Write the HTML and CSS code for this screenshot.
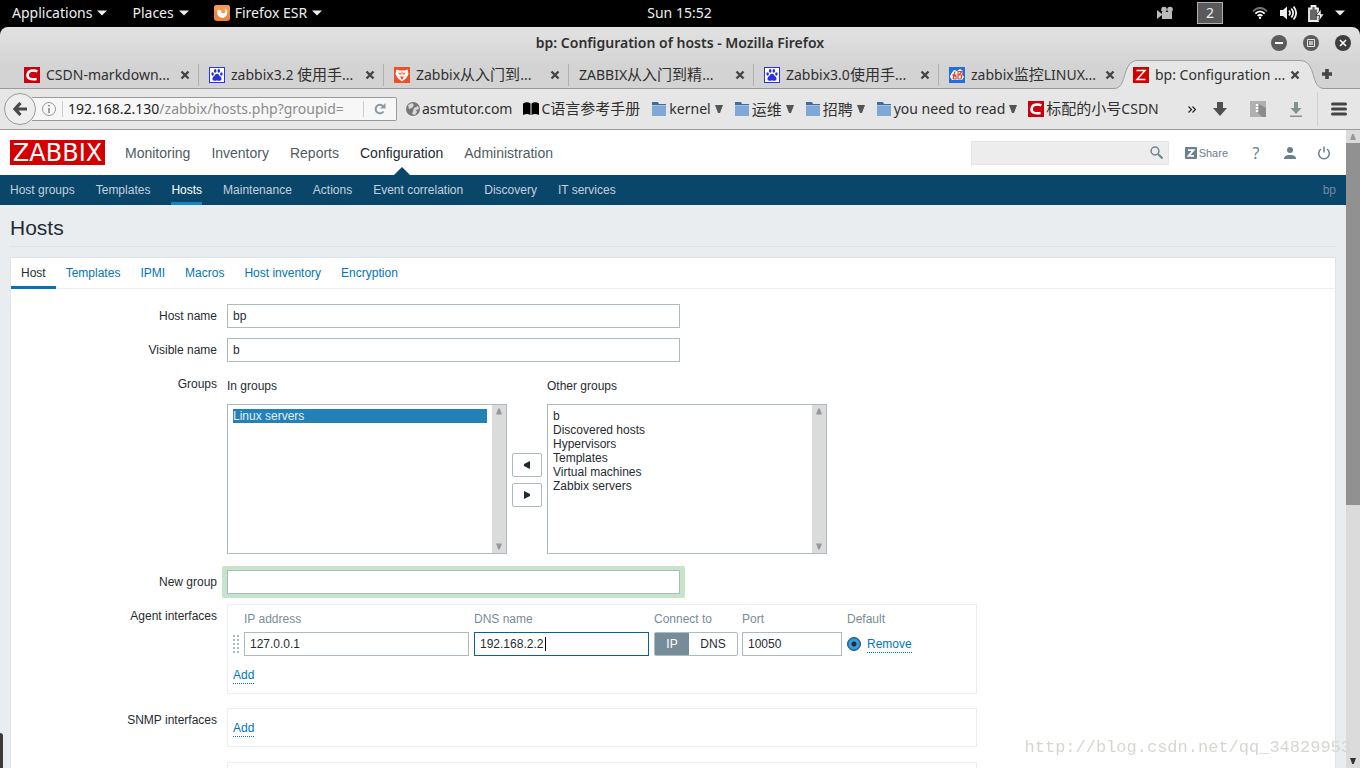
FILE: index.html
```html
<!DOCTYPE html>
<html lang="en">
<head>
<meta charset="utf-8">
<title>bp: Configuration of hosts</title>
<link rel="stylesheet" href="styles.css">
</head>
<body>
<svg class="defs" aria-hidden="true">
  <symbol id="csdn" viewBox="0 0 16 16"><rect width="16" height="16" fill="#c9000d"/><path d="M13.4 4.2C8.6 2.6 4.2 3.6 3.6 7.6c-.5 4 3 5.200 9 4.400" fill="none" stroke="#fff" stroke-width="2.600"/></symbol>
  <symbol id="baidu" viewBox="0 0 16 16"><rect x=".5" y=".5" width="15" height="15" fill="#fff" stroke="#2932e1"/><g fill="#2932e1"><ellipse cx="3.600" cy="7" rx="1.300" ry="1.800"/><ellipse cx="6.200" cy="3.900" rx="1.300" ry="1.800"/><ellipse cx="9.800" cy="3.900" rx="1.300" ry="1.800"/><ellipse cx="12.400" cy="7" rx="1.300" ry="1.800"/><path d="M8 6.700c1.700 0 2.100 1.700 3.400 2.800 2 1.700 1.200 4.300-1 4.300-1 0-1.400-.3-2.400-.3s-1.400.3-2.400.3c-2.200 0-3-2.600-1-4.300C5.900 8.400 6.300 6.700 8 6.700z"/></g></symbol>
  <symbol id="folder" viewBox="0 0 16 16"><path d="M1 1h6l1 2h7v3H1z" fill="#3f6d94"/><rect x="1" y="4" width="14" height="11" fill="#7fa8d6"/><path d="M1 4h14v1H1z" fill="#a3c1e3"/></symbol>
  <symbol id="close" viewBox="0 0 10 10"><path d="M1.500 1.500l7 7m0-7l-7 7" stroke="#454545" stroke-width="2.400"/></symbol>
  <symbol id="down" viewBox="0 0 10 6"><path d="M0 .5h10L5 5.500z" fill="currentColor"/></symbol>
  <symbol id="tri" viewBox="0 0 8 8"><path d="M0 0h8L5 8H3z" fill="currentColor"/></symbol>
</svg>

<header class="topbar">
  <nav class="desk-menu">
    <button class="plain">Applications <svg class="caret"><use href="#down"/></svg></button>
    <button class="plain">Places <svg class="caret"><use href="#down"/></svg></button>
    <button class="plain"><svg class="fx" viewBox="0 0 16 16"><rect width="16" height="16" rx="3" fill="#f0843c"/><rect width="16" height="7" rx="3" fill="#f59a55"/><path d="M4 4.500c-2 3.500-.3 8 4 8.300 4 .2 6.200-3.300 5-7.300-.6-1.200-1.400-1.700-2.300-2 1 1.500 1 3 .2 4-.7.800-2 1-3 .3C7 7 7 6 7.600 5.500 6.500 5.600 5 5.300 4 4.500z" fill="#fff"/></svg>Firefox ESR <svg class="caret"><use href="#down"/></svg></button>
  </nav>
  <time>Sun 15:52</time>
  <div class="tray">
    <svg class="cam" viewBox="0 0 16 14"><g fill="#bbb"><circle cx="7" cy="3.500" r="2.800"/><circle cx="13" cy="3.500" r="2.800"/><path d="M5 6h10v7H5zM0 4l5 4v1l-5 4z"/></g></svg>
    <button class="workspace">2</button>
    <svg class="wifi" viewBox="0 0 16 12"><g fill="none" stroke="#fff" stroke-width="1.800"><path d="M1 4.500C5-.2 11-.2 15 4.500" stroke="#777"/><path d="M3.300 6.700c3-3.200 6.400-3.200 9.400 0"/><path d="M5.600 8.900c1.600-1.600 3.200-1.600 4.800 0"/></g><circle cx="8" cy="10.800" r="1.200" fill="#fff"/></svg>
    <svg class="vol" viewBox="0 0 17 16"><path d="M0 5h3l4-3.500v13L3 11H0z" fill="#eee"/><g fill="none" stroke="#eee" stroke-width="1.800"><path d="M9 5.500q2 2.500 0 5M11.300 3.500q3.600 4.500 0 9M13.600 1.500q5 6.500 0 13"/></g></svg>
    <svg class="bat" viewBox="0 0 16 17"><path d="M1 3.500h2.500V1h4v2.500H10V16H1z" fill="#666" stroke="#eee" stroke-width="1.800"/><path d="M13 4l-5 6.500h3.500L11 16l5-7h-3z" fill="#eee" stroke="#000" stroke-width=".6"/></svg>
    <svg class="caret"><use href="#down"/></svg>
  </div>
</header>

<div class="window">
  <div class="titlebar">
    <strong>bp: Configuration of hosts - Mozilla Firefox</strong>
    <div class="winbuttons">
      <button class="plain" aria-label="Minimize"><svg viewBox="0 0 16 16"><circle cx="8" cy="8" r="8" fill="#5c5c5c"/><path d="M4 8h8" stroke="#fff" stroke-width="1.800"/></svg></button>
      <button class="plain" aria-label="Maximize"><svg viewBox="0 0 16 16"><circle cx="8" cy="8" r="8" fill="#5c5c5c"/><path d="M4.500 4.500h7v7h-7z" fill="none" stroke="#e8e8e8"/><path d="M6 6h4v4H6z" fill="#bbb"/></svg></button>
      <button class="plain" aria-label="Close"><svg viewBox="0 0 16 16"><circle cx="8" cy="8" r="8" fill="#3e3e3e"/><path d="M5 5l6 6m0-6l-6 6" stroke="#fff" stroke-width="1.600"/></svg></button>
    </div>
  </div>

  <div class="tabs">
    <div class="tab"><svg class="ico"><use href="#csdn"/></svg><span>CSDN-markdown...</span><svg class="x"><use href="#close"/></svg></div>
    <div class="tab"><svg class="ico"><use href="#baidu"/></svg><span>zabbix3.2 <bdi lang="zh">使用手</bdi>...</span><svg class="x"><use href="#close"/></svg></div>
    <div class="tab"><svg class="ico" viewBox="0 0 16 16"><rect width="16" height="16" fill="#ef4f23"/><path d="M2.500 2.500l3.500 1h4l3.500-1L14.500 7l-2 4L8 14.500 3.500 11l-2-4z" fill="#fff"/><path d="M4 5.500l3 .8L6.300 8zM12 5.500l-3 .8.7 1.700zM6 9.500h4L8 13zM7.500 4.500h1v3h-1z" fill="#ef4f23"/></svg><span>Zabbix<bdi lang="zh">从入门到</bdi>...</span><svg class="x"><use href="#close"/></svg></div>
    <div class="tab"><span>ZABBIX<bdi lang="zh">从入门到精</bdi>...</span><svg class="x"><use href="#close"/></svg></div>
    <div class="tab"><svg class="ico"><use href="#baidu"/></svg><span>Zabbix3.0<bdi lang="zh">使用手</bdi>...</span><svg class="x"><use href="#close"/></svg></div>
    <div class="tab last"><svg class="ico" viewBox="0 0 16 16"><rect width="16" height="16" fill="#1f6fe0"/><path d="M2 7l3-4 3 1 3-2 3 2-1 3 2 3-2 3H3L1 10z" fill="#fff"/><path d="M3 8h4M6 4.500L4 12M4 12h3V9H4M9 4.500h4L10 8h3l-1 4H9z" fill="none" stroke="#e0402c" stroke-width="1.200"/></svg><span>zabbix<bdi lang="zh">监控</bdi>LINUX...</span><svg class="x"><use href="#close"/></svg></div>
    <div class="tab active">
      <svg class="curve" viewBox="0 0 24 29"><path d="M0 29V28.500C14 28.500 7 .5 24 .5V29z" fill="#e6e6e6"/><path d="M0 28.500C14 28.500 7 .5 24 .5" fill="none" stroke="#9a9fa5"/></svg>
      <div class="tab-body"><svg class="ico" viewBox="0 0 16 16"><rect width="16" height="16" fill="#d40000"/><path d="M3.500 3.500h8.500L4 12.500h8.500" fill="none" stroke="#fff" stroke-width="1.500"/></svg><span>bp: Configuration ...</span><svg class="x"><use href="#close"/></svg></div>
      <svg class="curve" viewBox="0 0 24 29"><path d="M24 29V28.500C10 28.500 17 .5 0 .5V29z" fill="#e6e6e6"/><path d="M24 28.500C10 28.500 17 .5 0 .5" fill="none" stroke="#9a9fa5"/></svg>
    </div>
    <button class="plain newtab" aria-label="New tab"><svg viewBox="0 0 10 10"><path d="M5 0v10M0 5h10" stroke="#454545" stroke-width="3.600"/></svg></button>
  </div>

  <div class="toolbar">
    <button class="plain back" aria-label="Back"><svg viewBox="0 0 14 14"><path d="M7.500 1L2 7l5.500 6M2 7h12" fill="none" stroke="#4a4a4a" stroke-width="3.200"/></svg></button>
    <div class="urlbar">
      <svg class="info" viewBox="0 0 14 14"><circle cx="7" cy="7" r="6.500" fill="none" stroke="#999"/><path d="M7 6v5M7 3v1.600" stroke="#888" stroke-width="1.600"/></svg>
      <span class="url"><b>192.168.2.130</b>/zabbix/hosts.php?groupid=</span>
      <button class="plain reload" aria-label="Reload"><svg viewBox="0 0 12 12"><path d="M9.500 8.500A4.300 4.300 0 1 1 9 3" fill="none" stroke="#8a9aa6" stroke-width="2"/><path d="M11.500 0v5.500H6z" fill="#8a9aa6"/></svg></button>
    </div>
    <nav class="bookmarks">
      <a href="#"><svg class="globe" viewBox="0 0 14 14"><circle cx="7" cy="7" r="7" fill="#777"/><path d="M2 3l4-2 2 2-2 3-3 1zM8 6l4-2 1 3-3 1 1 2-2 3-3-1 1-3z" fill="#d8d8d8"/></svg>asmtutor.com</a>
      <a href="#"><svg class="ico" viewBox="0 0 16 16"><path d="M0 2.500Q4 0 7.500 2.500V14Q4 12 0 14zM8.500 2.500Q12 0 16 2.500V14Q12 12 8.500 14z"/></svg><span>C<bdi lang="zh">语言参考手册</bdi></span></a>
      <a href="#"><svg class="ico"><use href="#folder"/></svg>kernel<svg class="tri"><use href="#tri"/></svg></a>
      <a href="#"><svg class="ico"><use href="#folder"/></svg><bdi lang="zh">运维</bdi><svg class="tri"><use href="#tri"/></svg></a>
      <a href="#"><svg class="ico"><use href="#folder"/></svg><bdi lang="zh">招聘</bdi><svg class="tri"><use href="#tri"/></svg></a>
      <a href="#"><svg class="ico"><use href="#folder"/></svg>you need to read<svg class="tri"><use href="#tri"/></svg></a>
      <a href="#"><svg class="ico"><use href="#csdn"/></svg><span><bdi lang="zh">标配的小号</bdi>CSDN</span></a>
    </nav>
    <div class="tools">
      <button class="plain more" aria-label="More"><svg viewBox="0 0 8 7"><path d="M.5.500l3 3-3 3M4.500.500l3 3-3 3" fill="none" stroke="#222" stroke-width="1.200"/></svg></button>
      <button class="plain" aria-label="Downloads"><svg viewBox="0 0 16 16"><path d="M5 1h6v6h4l-7 8-7-8h4z" fill="#505050"/></svg></button>
      <button class="plain zip" aria-label="Archive"><svg viewBox="0 0 16 16"><rect width="16" height="16" fill="#b0b0b0"/><path d="M9 3l7 4v9h-4l-4-4z" fill="#8c8c8c"/><path d="M7 3v9" stroke="#fff" stroke-width="2.400" stroke-dasharray="2 1"/></svg></button>
      <button class="plain" aria-label="Save"><svg viewBox="0 0 16 16"><path d="M6 1h4v6h3.500L8 13 2.500 7H6z" fill="#82928f"/><path d="M2 15.200h12" stroke="#82928f" stroke-width="1.400"/></svg></button>
      <button class="plain burger" aria-label="Menu"><svg viewBox="0 0 16 14"><path d="M1.500 2h13M1.500 7h13M1.500 12h13" stroke="#444" stroke-width="3" stroke-linecap="round"/></svg></button>
    </div>
  </div>

  <div class="viewport">
    <main class="page">
      <header class="head">
        <a class="logo" href="#" aria-label="Home">ZABBIX</a>
        <nav class="mainmenu"><a href="#">Monitoring</a><a href="#">Inventory</a><a href="#">Reports</a><a href="#" class="on">Configuration</a><a href="#">Administration</a></nav>
        <div class="userbox">
          <div class="search"><input type="text" aria-label="Search"><svg viewBox="0 0 13 13"><circle cx="5" cy="5" r="3.900" fill="none" stroke="#6f8590" stroke-width="1.500"/><path d="M8 8l4.500 4.500" stroke="#6f8590" stroke-width="2"/></svg></div>
          <a class="share" href="#"><svg viewBox="0 0 12 12"><rect width="12" height="12" rx="1" fill="#6b808d"/><path d="M3 3.200h5.500L3.600 8.800H9" fill="none" stroke="#fff" stroke-width="1.800"/></svg>Share</a>
          <a class="uico help" href="#">?</a>
          <a class="uico" href="#" aria-label="Profile"><svg viewBox="0 0 14 14"><circle cx="7" cy="4" r="3" fill="#6b808d"/><path d="M1 13c0-3 2-4 6-4s6 1 6 4z" fill="#6b808d"/></svg></a>
          <a class="uico" href="#" aria-label="Sign out"><svg viewBox="0 0 14 14"><path d="M4 3a5.300 5.300 0 1 0 6 0M7 .5v6" fill="none" stroke="#6b808d" stroke-width="1.500"/></svg></a>
        </div>
      </header>
      <nav class="submenu"><a href="#">Host groups</a><a href="#">Templates</a><a href="#" class="on">Hosts</a><a href="#">Maintenance</a><a href="#">Actions</a><a href="#">Event correlation</a><a href="#">Discovery</a><a href="#">IT services</a><span class="who">bp</span></nav>
      <div class="content">
        <h1>Hosts</h1>
        <form class="card">
          <nav class="formtabs"><a href="#" class="on">Host</a><a href="#">Templates</a><a href="#">IPMI</a><a href="#">Macros</a><a href="#">Host inventory</a><a href="#">Encryption</a></nav>
          <div class="fields">
            <label class="lab" for="host">Host name</label>
            <input class="text wide" id="host" type="text" value="bp">
            <label class="lab" for="visible">Visible name</label>
            <input class="text wide" id="visible" type="text" value="b">
            <span class="lab">Groups</span>
            <div class="groups">
              <div class="groupcol">
                <label for="in">In groups</label>
                <div class="list"><select id="in" multiple><option selected>Linux servers</option></select><div class="bar"><svg class="up"><use href="#tri"/></svg><svg><use href="#tri"/></svg></div></div>
              </div>
              <div class="move">
                <button type="button" aria-label="Add to groups"><svg viewBox="0 0 6 8"><path d="M6 0v8L0 5V3z"/></svg></button>
                <button type="button" aria-label="Remove from groups"><svg viewBox="0 0 6 8"><path d="M0 0v8l6-3V3z"/></svg></button>
              </div>
              <div class="groupcol">
                <label for="other">Other groups</label>
                <div class="list"><select id="other" multiple><option>b</option><option>Discovered hosts</option><option>Hypervisors</option><option>Templates</option><option>Virtual machines</option><option>Zabbix servers</option></select><div class="bar"><svg class="up"><use href="#tri"/></svg><svg><use href="#tri"/></svg></div></div>
              </div>
            </div>
            <label class="lab newlab" for="newgroup">New group</label>
            <div class="glow"><input class="text wide" id="newgroup" type="text"></div>
            <span class="lab">Agent interfaces</span>
            <div class="box agent">
              <table>
                <thead><tr><th></th><th>IP address</th><th>DNS name</th><th>Connect to</th><th>Port</th><th>Default</th></tr></thead>
                <tbody><tr>
                  <td class="drag"><svg viewBox="0 0 6 18"><path d="M1 0v18M5 0v18" stroke="#aab8c0" stroke-width="2" stroke-dasharray="2 2"/></svg></td>
                  <td class="c-ip"><input class="text" type="text" aria-label="IP address" value="127.0.0.1"></td>
                  <td class="c-dns"><div class="focus"><input class="text" type="text" aria-label="DNS name" value="192.168.2.2"><i class="cursor"></i></div></td>
                  <td class="c-conn"><div class="seg"><label class="picked"><input type="radio" name="useip" checked>IP</label><label><input type="radio" name="useip">DNS</label></div></td>
                  <td class="c-port"><input class="text" type="text" aria-label="Port" value="10050"></td>
                  <td><div class="def"><input type="radio" name="main" aria-label="Default" checked><button type="button" class="link">Remove</button></div></td>
                </tr></tbody>
              </table>
              <button type="button" class="link">Add</button>
            </div>
            <span class="lab">SNMP interfaces</span>
            <div class="box"><button type="button" class="link">Add</button></div>
            <span class="lab"></span>
            <div class="box"></div>
          </div>
        </form>
      </div>
    </main>
    <div class="scrollbar"><div class="cap"><svg class="up"><use href="#tri"/></svg></div><div class="thumb"></div><div class="track"></div><svg class="end"><use href="#tri"/></svg></div>
  </div>
</div>
<div class="corner"></div>
<div class="watermark">http://blog.csdn.net/qq_34829953</div>
</body>
</html>
```
FILE: styles.css
```css
* { box-sizing: border-box; }
body {
  margin: 0;
  height: 100vh;
  display: flex;
  flex-direction: column;
  overflow: hidden;
  background: #000;
  color: #1f2c33;
  font: 12px/14px "Liberation Sans", Arial, sans-serif;
}
a { text-decoration: none; color: inherit; }
svg { display: block; flex: none; }
button, input, select { font: inherit; color: inherit; margin: 0; }
.plain { background: none; border: 0; padding: 0; display: flex; align-items: center; }
.defs { position: absolute; width: 0; height: 0; }
.ico { width: 16px; height: 16px; }
.caret { width: 10px; height: 6px; }

/* desktop bar */
.topbar, .titlebar, .tabs, .toolbar { font-family: "Noto Sans", "Noto Sans CJK SC", sans-serif; font-size: 14px; line-height: 20px; }
[lang="zh"] { font-family: "Noto Sans CJK SC", sans-serif; font-size: 15px; line-height: 18px; }
.topbar { height: 27px; flex: none; display: grid; grid-template-columns: 1fr auto 1fr; align-items: center; color: #eee; padding: 0 13px 1px 12px; }
.desk-menu { display: flex; gap: 25px; }
.desk-menu .plain { gap: 5px; }
.fx { width: 16px; height: 16px; }
.tray { display: flex; align-items: center; justify-content: flex-end; padding-right: 2px; }
.cam { width: 16px; height: 14px; margin-right: 24px; }
.workspace { width: 26px; height: 22px; padding: 0; border: 1px solid #b0b0b0; background: #5a5a5a; margin-right: 29px; }
.wifi { width: 16px; height: 12px; margin-right: 12px; }
.vol { width: 17px; height: 16px; margin-right: 11px; }
.bat { width: 16px; height: 17px; margin-right: 11px; }

/* browser window */
.window { flex: 1; min-height: 0; display: flex; flex-direction: column; border-radius: 8px 8px 0 0; overflow: hidden; background: linear-gradient(#e2e2e2, #d3d3d3 40px); color: #303030; }
.titlebar { height: 33px; flex: none; display: grid; grid-template-columns: 1fr auto 1fr; align-items: center; padding: 0 9px 2px; }
.titlebar strong { grid-column: 2; font-weight: 600; }
.winbuttons { display: flex; gap: 16px; justify-content: flex-end; }
.winbuttons svg { width: 16px; height: 16px; }
.tabs { height: 29px; flex: none; display: flex; padding-left: 14px; border-bottom: 1px solid #9a9a9a; }
.tab { flex: 0 1 185px; min-width: 0; display: flex; align-items: center; gap: 6px; padding: 2px 9px 0 10px; position: relative; white-space: nowrap; }
.tab span { flex: 1; min-width: 0; }
.tab:not(.last):not(.active)::after { content: ""; position: absolute; right: 0; top: 4px; bottom: 2px; width: 1px; background: #b0b0b0; }
.x { width: 10px; height: 10px; }
.tab.active { flex: 0 0 210px; margin: 0 -4px 0 -10px; padding: 0; gap: 0; height: 29px; }
.curve { width: 24px; height: 29px; }
.tab-body { flex: 1; min-width: 0; height: 29px; display: flex; align-items: center; background: #e6e6e6; border-top: 1px solid #9a9fa5; }
.tab-body .ico { margin: 0 6px 0 -5px; }
.newtab { width: 14px; justify-content: center; }
.newtab svg { width: 10px; height: 10px; }

.toolbar { height: 41px; flex: none; display: flex; align-items: center; background: #e6e6e6; border-bottom: 1px solid #9a9a9a; padding: 0 13px 0 4px; }
.back { width: 32px; height: 32px; flex: none; border: 1px solid #9a9a9a; border-radius: 50%; background: #eee; justify-content: center; z-index: 1; }
.back svg { width: 14px; height: 14px; }
.urlbar { flex: 0 1 365px; margin-left: -4px; height: 24px; display: flex; align-items: center; border: 1px solid #9a9a9a; border-left: 0; border-radius: 0 2px 2px 0; background: #f7f7f7; padding-left: 10px; }
.info { width: 14px; height: 14px; }
.url { flex: 1; margin-left: 6px; padding-left: 5px; border-left: 1px solid #ccc; height: 16px; line-height: 16px; color: #8c8c8c; white-space: nowrap; }
.url b { font-weight: 400; color: #222; }
.reload { border-left: 1px solid #ccc; height: 16px; padding: 0 10px; }
.reload svg { width: 12px; height: 12px; }
.bookmarks { flex: 1; min-width: 0; display: flex; gap: 11px; margin-left: 9px; white-space: nowrap; }
.bookmarks a { display: flex; align-items: center; gap: 2px; }
.globe { width: 14px; height: 14px; }
.tri { width: 8px; height: 8px; margin-left: 2px; color: #555; }
.tools { display: flex; align-items: center; gap: 22px; height: 40px; }
.tools svg { width: 16px; height: 16px; }
.tools .more { margin-right: -6px; }
.tools .more svg { width: 8px; height: 7px; }
.tools .burger { border-left: 1px solid #d0d0d0; height: 34px; padding-left: 13px; margin-left: -9px; }

/* page */
.viewport { flex: 1; min-height: 0; display: flex; background: #e9edf0; }
.page { flex: 1; min-width: 0; overflow: hidden; color: #1f2c33; }
.head { height: 45px; background: #fff; display: flex; align-items: center; padding: 0 15px 0 10px; }
.logo { background: #d40000; color: #fff; height: 25px; width: 95px; font: 24px/26px "DejaVu Sans", sans-serif; text-align: center; }
.mainmenu { display: flex; gap: 21px; margin-left: 20px; font-size: 14px; height: 45px; line-height: 47px; color: #4f5b62; }
.mainmenu .on { color: #1f2c33; position: relative; }
.mainmenu .on::after { content: ""; position: absolute; left: 50%; bottom: 0; margin-left: -8px; border: 8px solid transparent; border-top: 0; border-bottom-color: #0a466a; }
.userbox { margin-left: auto; display: flex; align-items: center; color: #6b808d; }
.search { width: 198px; height: 24px; background: #ededed; border: 1px solid #e4e4e4; display: flex; align-items: center; padding-right: 5px; }
.search input { flex: 1; min-width: 0; border: 0; background: none; }
.search svg { width: 13px; height: 13px; }
.share { display: flex; align-items: center; gap: 2px; font-size: 11px; margin: 0 21px 0 16px; }
.share svg { width: 12px; height: 12px; }
.uico { width: 14px; margin-left: 20px; text-align: center; }
.uico svg { width: 14px; height: 14px; }
.help { font: 16px/16px "Noto Sans", sans-serif; margin-left: 0; }
.submenu { height: 30px; background: #0a466a; color: #c2d1db; display: flex; gap: 21px; padding: 0 10px; line-height: 30px; }
.submenu .on { color: #fff; border-bottom: 3px solid #1385c7; }
.who { margin-left: auto; color: #6f8c9f; }
.content { padding: 10px; }
h1 { margin: 0 0 10px; font-size: 21px; font-weight: 400; line-height: 26px; padding-bottom: 5px; border-bottom: 1px solid #dfe4e7; }
.card { background: #fff; border: 1px solid #dfe4e7; }
.formtabs { display: flex; height: 31px; line-height: 30px; border-bottom: 1px solid #ebeef0; color: #0275b8; }
.formtabs a { padding: 0 10px; }
.formtabs .on { color: #1f2c33; border-bottom: 3px solid #0275b8; height: 31px; }
.fields { display: grid; grid-template-columns: 206px 1fr; column-gap: 10px; row-gap: 10px; padding: 15px 0 40px; align-items: start; }
.lab { text-align: right; padding-top: 5px; }
.text { height: 24px; border: 1px solid #acbbc2; background: #fff; padding: 0 5px; width: 100%; border-radius: 0; outline: 0; }
.wide { width: 453px; max-width: 100%; display: block; }
.groups { display: flex; align-items: flex-end; gap: 5px; }
.groupcol { display: flex; flex-direction: column; gap: 11px; padding-top: 7px; }
.list { display: flex; width: 280px; height: 150px; border: 1px solid #acbbc2; }
.list select { flex: 1; min-width: 0; border: 0; border-radius: 0; outline: 0; padding: 4px 5px; background: #fff; overflow: hidden; scrollbar-width: none; }
.list option { padding: 0; height: 14px; min-height: 14px; line-height: 14px; }
.list option:checked { background: linear-gradient(#2381b8, #2381b8); color: #fff; -webkit-text-fill-color: #e4eef5; }
.bar { width: 14px; background: #dbdbdb; display: flex; flex-direction: column; justify-content: space-between; align-items: center; padding: 3px 0; color: #999; }
.bar svg { width: 6px; height: 7px; }
.up { transform: rotate(180deg); }
.move { display: flex; flex-direction: column; gap: 6px; padding-bottom: 47px; }
.move button { width: 30px; height: 24px; border: 1px solid #acbbc2; border-radius: 2px; background: #fff; display: flex; align-items: center; justify-content: center; padding: 0; }
.move svg { width: 6px; height: 8px; fill: #1f2c33; }
.newlab { padding-top: 11px; }
.glow { justify-self: start; margin: 2px 0 -4px -5px; padding: 4px 5px; background: #c5e4c8; border-radius: 2px; }
.box { width: 750px; max-width: 100%; min-height: 39px; border: 1px solid #ebeef0; padding: 12px 5px 9px; margin-bottom: 5px; }
.box.agent { padding: 7px 5px 9px; margin-bottom: 4px; }
table { border-collapse: collapse; margin-bottom: 12px; }
th { font-weight: 400; text-align: left; color: #768d99; padding: 0 0 6px; }
td { padding: 0 5px 0 0; }
.drag svg { width: 6px; height: 18px; }
.c-ip { width: 230px; }
.c-dns { width: 180px; }
.c-conn { width: 88px; padding-right: 4px; }
.c-port { width: 105px; }
.focus { position: relative; }
.focus .text { border-color: #0a6197; }
.cursor { position: absolute; left: 71px; top: 5px; width: 1px; height: 14px; background: #000; }
.seg { display: flex; width: 84px; height: 24px; border: 1px solid #acbbc2; border-radius: 2px; line-height: 22px; text-align: center; }
.seg input { position: absolute; opacity: 0; }
.seg label { flex: 1 1 48px; }
.seg .picked { flex: 0 0 34px; background: #768d99; color: #fff; }
.def { display: flex; align-items: center; gap: 6px; }
.def input { appearance: none; width: 14px; height: 14px; border-radius: 50%; border: 1px solid #2a5878; background: radial-gradient(circle, #1f2c33 0 2px, #3a9bdc 3px 5px, #1c6aa5 6px); }
.link { border: 0; border-bottom: 1px dotted #0275b8; background: none; padding: 0; color: #0275b8; line-height: 15px; }
.def .link { padding-top: 1px; }

.scrollbar { width: 14px; display: flex; flex-direction: column; align-items: center; background: #dbdbdb; }
.cap { height: 13px; display: flex; align-items: center; color: #999; }
.cap svg { width: 6px; height: 6px; }
.thumb { flex: 360; width: 14px; background: #919191; }
.track { flex: 252; }
.end { width: 6px; height: 6px; margin-bottom: 4px; color: #333; }
.corner { position: fixed; left: 0; bottom: 0; width: 3px; height: 35px; background: #3a3a3a; border-radius: 0 3px 0 0; }
.watermark { position: fixed; right: 9px; bottom: 10px; font: 17px/20px "Liberation Mono", monospace; color: #d6d6d1; }
```
